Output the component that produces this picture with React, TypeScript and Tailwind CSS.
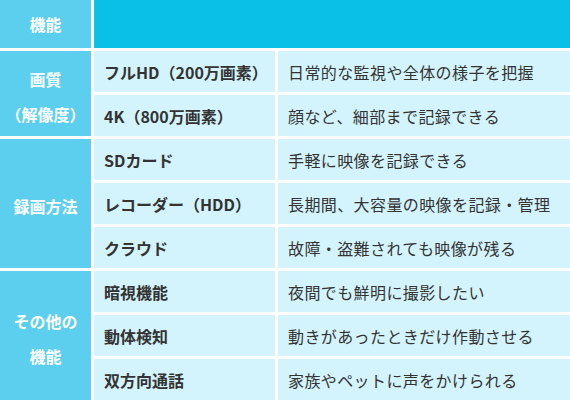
import React from 'react';

type Row = { name: string; desc: string };
type Group = { label: string[]; rows: Row[] };

const GROUPS: Group[] = [
  {
    label: ['画質', '（解像度）'],
    rows: [
      { name: 'フルHD（200万画素）', desc: '日常的な監視や全体の様子を把握' },
      { name: '4K（800万画素）', desc: '顔など、細部まで記録できる' },
    ],
  },
  {
    label: ['録画方法'],
    rows: [
      { name: 'SDカード', desc: '手軽に映像を記録できる' },
      { name: 'レコーダー（HDD）', desc: '長期間、大容量の映像を記録・管理' },
      { name: 'クラウド', desc: '故障・盗難されても映像が残る' },
    ],
  },
  {
    label: ['その他の', '機能'],
    rows: [
      { name: '暗視機能', desc: '夜間でも鮮明に撮影したい' },
      { name: '動体検知', desc: '動きがあったときだけ作動させる' },
      { name: '双方向通話', desc: '家族やペットに声をかけられる' },
    ],
  },
];

const App: React.FC = () => {
  return (
    <div
      className="w-[570px] h-[400px] overflow-hidden bg-white text-[16px]"
      style={{ fontFamily: '"Noto Sans CJK JP", "Noto Sans", sans-serif' }}
    >
      <div className="grid grid-cols-[91px_181px_1fr] auto-rows-[41px] grid-rows-[48px] gap-[3px]">
        <div className="bg-[#5ccfee] text-white font-bold flex items-center justify-center">機能</div>
        <div className="col-span-2 bg-[#0bc0e6]" />

        {GROUPS.map((g) => (
          <React.Fragment key={g.label.join('')}>
            <div
              className={
                'col-start-1 bg-[#5ccfee] text-white font-bold flex flex-col items-center justify-center leading-[35px] pt-[6px] ' +
                (g.rows.length === 2 ? 'row-span-2' : 'row-span-3')
              }
            >
              {g.label.map((l) => (
                <span key={l}>{l}</span>
              ))}
            </div>
            {g.rows.map((r) => (
              <React.Fragment key={r.name}>
                <div className="col-start-2 bg-[#d3f4fc] text-[#333] font-bold flex items-center pl-[10px]">
                  {r.name}
                </div>
                <div className="col-start-3 bg-[#d3f4fc] text-[#333] tracking-[0.4px] flex items-center pl-[10px]">
                  {r.desc}
                </div>
              </React.Fragment>
            ))}
          </React.Fragment>
        ))}
      </div>
    </div>
  );
};

export default App;
